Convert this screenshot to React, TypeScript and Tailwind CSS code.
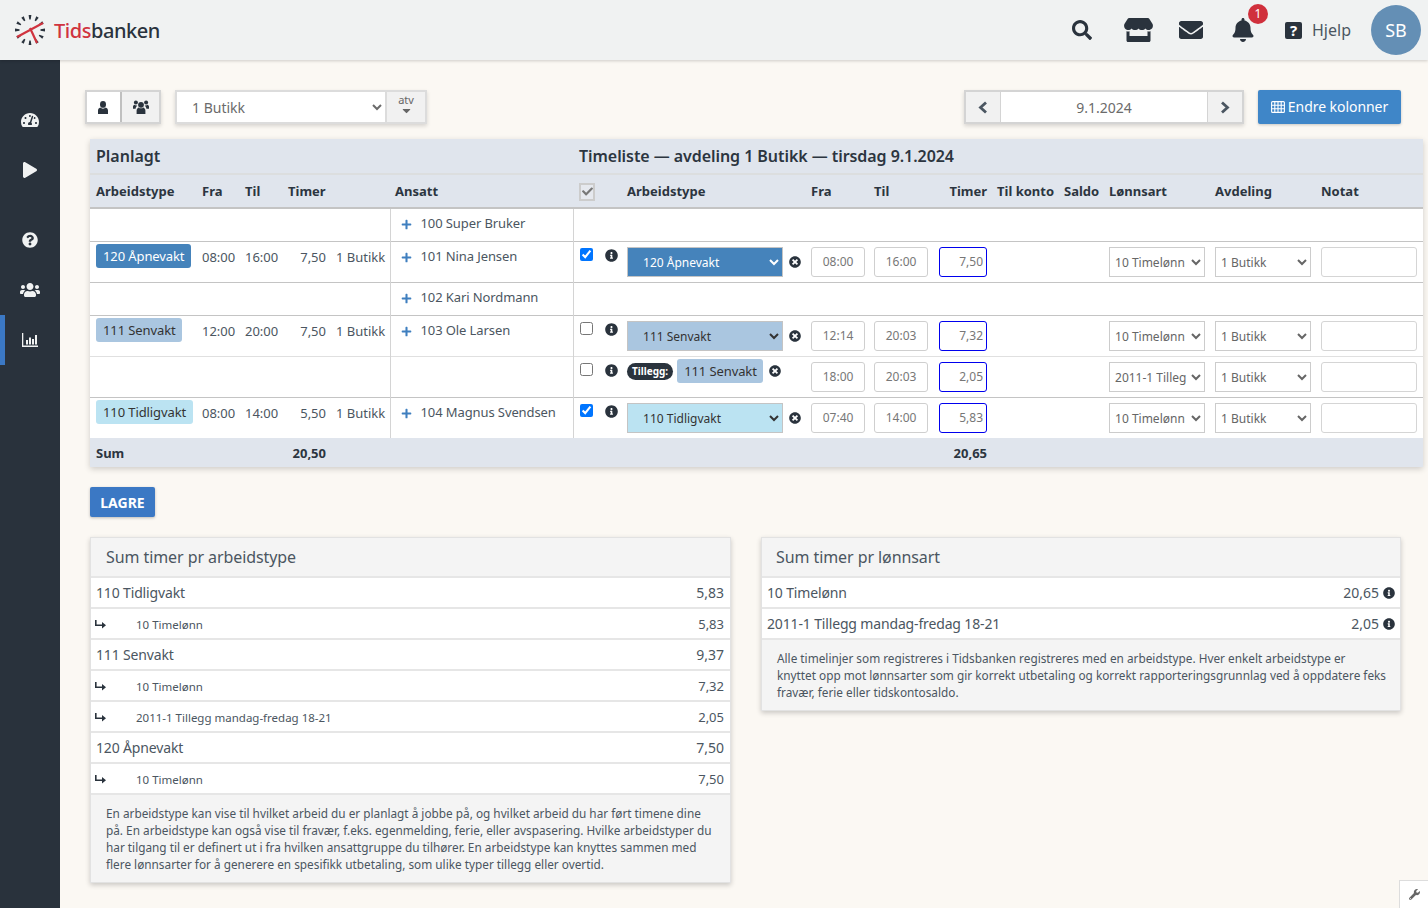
import React from "react";
import { FaSearch, FaStore, FaEnvelope, FaBell, FaTachometerAlt, FaPlay, FaQuestionCircle, FaUsers, FaPlus, FaInfoCircle, FaTimesCircle, FaCaretDown, FaWrench, FaCheck } from "react-icons/fa";

const cols = [107, 43, 43, 48, 59, 183, 27, 22, 184, 63, 64, 59, 67, 45, 106, 106, 107];

function Logo() {
  const ticks = [0, 30, 60, 90, 120, 150, 180, 210, 240, 270, 300, 330];
  return (
    <svg width="32" height="32" viewBox="0 0 32 32" className="shrink-0">
      {ticks.map((a) => (
        <polygon key={a} points="14.6,1 17.4,1 16.7,5.5 15.3,5.5" fill="#2a333d" transform={`rotate(${a} 16 16)`} />
      ))}
      <path d="M3 23 L29 9 M16 14 L23 29" stroke="#d0343f" strokeWidth="2.2" fill="none" />
    </svg>
  );
}

function ChartIcon() {
  return (
    <svg width="16" height="14" viewBox="0 0 16 14" fill="#f0f2f2">
      <path d="M0 0h1.3v12.6H16V14H0z" />
      <rect x="4" y="7" width="2" height="4.5" />
      <rect x="7" y="4.5" width="2" height="7" />
      <rect x="10" y="6" width="2" height="5.5" />
      <rect x="13" y="2" width="2" height="9.5" />
    </svg>
  );
}

function ArrowIcon() {
  return (
    <svg width="11" height="9" viewBox="0 0 11 9" fill="#2a333d">
      <path d="M0 0h1.6v4.4H7V2l4 3.2L7 8.4V6H0z" />
    </svg>
  );
}

function UserIcon() {
  return (
    <svg width="10" height="13" viewBox="0 0 10 13" fill="#2a333d">
      <ellipse cx="5" cy="3.4" rx="3" ry="3.4" />
      <path d="M0 13V9.6C0 8 1 7 2.4 6.6 3 7.3 4 7.8 5 7.8s2-.5 2.6-1.2C9 7 10 8 10 9.6V13z" />
    </svg>
  );
}

function GroupIcon() {
  return (
    <svg width="16" height="14" viewBox="0 0 16 14" fill="#2a333d">
      <circle cx="8" cy="4.8" r="2.9" />
      <circle cx="2.9" cy="2.4" r="2" />
      <circle cx="13.1" cy="2.4" r="2" />
      <path d="M3.6 14v-3.4C3.6 9 4.6 8 5.6 7.4 6.2 8 7 8.3 8 8.3s1.8-.3 2.4-.9c1 .6 2 1.6 2 3.2V14z" />
      <path d="M0 8.8V6.6C0 5.6.7 5 1.6 4.7c.4.4 1 .7 1.5.7.5 0 1 .1 1.2.4C3.4 6.5 2.7 7.6 2.6 8.8z" />
      <path d="M16 8.8V6.6C16 5.6 15.3 5 14.4 4.7c-.4.4-1 .7-1.5.7-.5 0-1 .1-1.2.4.9.7 1.6 1.8 1.7 3z" />
    </svg>
  );
}

function TableIcon() {
  return (
    <svg width="14" height="12" viewBox="0 0 14 12" fill="none" stroke="#ffffff" strokeWidth="1.1">
      <rect x="0.6" y="0.6" width="12.8" height="10.8" rx="1" />
      <path d="M0.6 4.2H13.4M0.6 7.8H13.4M3.8 0.6V11.4M7 0.6V11.4M10.2 0.6V11.4" />
    </svg>
  );
}

function Chevron({ right }: { right?: boolean }) {
  return (
    <svg width="10" height="13" viewBox="0 0 10 13" fill="none" stroke="#4b5661" strokeWidth="2.8">
      <path d={right ? "M2 1.5 L7.5 6.5 L2 11.5" : "M8 1.5 L2.5 6.5 L8 11.5"} />
    </svg>
  );
}

function Badge({ label, bg, fg }: { label: string; bg: string; fg: string }) {
  return <span className={`inline-block h-6 leading-6 pl-[7px] pr-[6.5px] rounded-[3px] text-[13px] tracking-[-0.1px] whitespace-nowrap ${bg} ${fg}`}>{label}</span>;
}

function TimeInput({ value }: { value: string }) {
  return <input readOnly defaultValue={value} className="block w-[54px] h-[30px] border border-[#cfcfcf] rounded-[3px] text-center text-[12px] text-[#777] bg-white outline-none" />;
}

function HoursInput({ value }: { value: string }) {
  return <input readOnly defaultValue={value} className="block w-[48px] h-[30px] border border-[#0000ee] rounded-[3px] text-right pr-[3px] text-[12px] text-[#777] bg-white outline-none" />;
}

function SmallSelect({ value }: { value: string }) {
  return (
    <select defaultValue={value} className="block w-[96px] h-[30px] border border-[#cccccc] bg-white text-[12px] text-[#666] pl-[1px] pt-[1px] outline-none">
      <option>{value}</option>
    </select>
  );
}

function NoteInput() {
  return <input readOnly className="block w-[96px] h-[30px] border border-[#d5d5d5] rounded-[3px] bg-white outline-none" />;
}

function Cross() {
  return <FaTimesCircle className="text-[#2a333d] text-[12px]" />;
}

type Row = {
  h: string;
  employee?: string;
  plan?: { label: string; bg: string; fg: string; from: string; to: string; hours: string };
  real?: {
    checked: boolean;
    addon?: boolean;
    label: string;
    selBg: string;
    selFg: string;
    from: string;
    to: string;
    hours: string;
    wage: string;
  };
};

const rows: Row[] = [
  { h: "h-[33px]", employee: "100 Super Bruker" },
  {
    h: "h-[41px]",
    employee: "101 Nina Jensen",
    plan: { label: "120 Åpnevakt", bg: "bg-[#4583bb]", fg: "text-white", from: "08:00", to: "16:00", hours: "7,50" },
    real: { checked: true, label: "120 Åpnevakt", selBg: "bg-[#4583bb]", selFg: "text-white", from: "08:00", to: "16:00", hours: "7,50", wage: "10 Timelønn" },
  },
  { h: "h-[33px]", employee: "102 Kari Nordmann" },
  {
    h: "h-[41px]",
    employee: "103 Ole Larsen",
    plan: { label: "111 Senvakt", bg: "bg-[#aac6e0]", fg: "text-[#333]", from: "12:00", to: "20:00", hours: "7,50" },
    real: { checked: false, label: "111 Senvakt", selBg: "bg-[#aac6e0]", selFg: "text-[#333]", from: "12:14", to: "20:03", hours: "7,32", wage: "10 Timelønn" },
  },
  {
    h: "h-[41px]",
    real: { checked: false, addon: true, label: "111 Senvakt", selBg: "", selFg: "", from: "18:00", to: "20:03", hours: "2,05", wage: "2011-1 Tilleg" },
  },
  {
    h: "h-[41px]",
    employee: "104 Magnus Svendsen",
    plan: { label: "110 Tidligvakt", bg: "bg-[#bbe3f2]", fg: "text-[#333]", from: "08:00", to: "14:00", hours: "5,50" },
    real: { checked: true, label: "110 Tidligvakt", selBg: "bg-[#bbe3f2]", selFg: "text-[#333]", from: "07:40", to: "14:00", hours: "5,83", wage: "10 Timelønn" },
  },
];

function Th({ children, right, first }: { children?: React.ReactNode; right?: boolean; first?: boolean }) {
  return <th className={`${first ? "pl-[6px]" : "pl-[5px]"} pr-[5px] pt-[1px] text-[13px] font-bold text-[#2c3540] whitespace-nowrap align-middle ${right ? "text-right" : "text-left"}`}>{children}</th>;
}

function TimeTable() {
  return (
    <table className="table-fixed border-collapse w-[1333px] bg-white shadow-[0_2px_6px_rgba(0,0,0,0.18)]">
      <colgroup>
        {cols.map((c, i) => (
          <col key={i} style={{ width: c }} />
        ))}
      </colgroup>
      <thead className="bg-[#e0e5ed]">
        <tr className="h-[35px] border-b-[2px] border-[#dcdedf]">
          <th colSpan={6} className="px-[6px] text-left text-[16px] font-semibold text-[#2c3540]">Planlagt</th>
          <th colSpan={11} className="text-left text-[16px] font-semibold tracking-[-0.06px] text-[#2c3540] pl-[6px]">
            Timeliste — avdeling 1 Butikk — tirsdag 9.1.2024
          </th>
        </tr>
        <tr className="h-[34px] border-b-[2px] border-[#c4c4c4]">
          <Th first>Arbeidstype</Th>
          <Th>Fra</Th>
          <Th>Til</Th>
          <Th>Timer</Th>
          <Th />
          <Th>Ansatt</Th>
          <Th>
            <span className="flex items-center justify-center w-[16px] h-[18px] ml-[1px] border-2 border-[#cccccc] bg-[#e6e9ef] text-[#777] text-[11px]">
              <FaCheck />
            </span>
          </Th>
          <Th />
          <Th>Arbeidstype</Th>
          <Th>Fra</Th>
          <Th>Til</Th>
          <Th right>Timer</Th>
          <Th>Til konto</Th>
          <Th>Saldo</Th>
          <Th>Lønnsart</Th>
          <Th>Avdeling</Th>
          <Th>Notat</Th>
        </tr>
      </thead>
      <tbody className="text-[13px] text-[#4b5661]">
        {rows.map((r, i) => (
          <tr key={i} className={`${r.h} border-b ${i === 3 ? "border-[#e0e0e0]" : "border-[#c4c4c4]"} last:border-b-0`}>
            <td className="pl-[6px] align-top pt-[2px]">{r.plan && <Badge label={r.plan.label} bg={r.plan.bg} fg={r.plan.fg} />}</td>
            <td className="px-[5px] align-top pt-[6px]">{r.plan?.from}</td>
            <td className="px-[5px] align-top pt-[6px]">{r.plan?.to}</td>
            <td className="px-[5px] align-top pt-[6px] text-right">{r.plan?.hours}</td>
            <td className="pl-[5px] align-top pt-[6px] whitespace-nowrap border-r border-[#d4d4d4]">{r.plan && "1 Butikk"}</td>
            <td className="pl-[10px] align-top pt-[5px] border-r border-[#d4d4d4] whitespace-nowrap tracking-[-0.1px]">
              {r.employee && (
                <span className="flex items-center gap-[9px]">
                  <FaPlus className="text-[#3f7fbf] text-[11px] mt-[2px]" />
                  {r.employee}
                </span>
              )}
            </td>
            {r.real ? (
              <>
                <td className="pl-[6px] align-top pt-[6px]">
                  <input type="checkbox" readOnly defaultChecked={r.real.checked} className="block" />
                </td>
                <td className="pl-[5px] align-top pt-[7px]">
                  <FaInfoCircle className="text-[#2a333d] text-[13px]" />
                </td>
                <td className="pl-[5px] align-middle">
                  {r.real.addon ? (
                    <span className="flex items-center gap-[4px] -mt-[12px]">
                      <span className="inline-block h-[17px] leading-[17px] mt-[2px] px-[5px] rounded-full bg-[#2a333d] text-white text-[10px] font-bold [font-family:'Liberation_Sans',sans-serif]">Tillegg:</span>
                      <Badge label={r.real.label} bg="bg-[#aac6e0]" fg="text-[#333]" />
                      <span className="ml-[2px]"><Cross /></span>
                    </span>
                  ) : (
                    <span className="flex items-center gap-[6px]">
                      <select defaultValue={r.real.label} className={`w-[156px] h-[30px] border border-[#c4c4c4] pl-[11px] pt-[1px] text-[12px] outline-none ${r.real.selBg} ${r.real.selFg}`}>
                        <option>{r.real.label}</option>
                      </select>
                      <Cross />
                    </span>
                  )}
                </td>
                <td className="pl-[5px]"><TimeInput value={r.real.from} /></td>
                <td className="pl-[5px]"><TimeInput value={r.real.to} /></td>
                <td className="pl-[6px]"><HoursInput value={r.real.hours} /></td>
                <td />
                <td />
                <td className="pl-[5px]"><SmallSelect value={r.real.wage} /></td>
                <td className="pl-[5px]"><SmallSelect value="1 Butikk" /></td>
                <td className="pl-[5px]"><NoteInput /></td>
              </>
            ) : (
              <td colSpan={11} />
            )}
          </tr>
        ))}
      </tbody>
      <tfoot className="bg-[#e0e5ed] text-[13px] font-bold text-[#2c3540]">
        <tr className="h-[29px]">
          <td className="pl-[6px] pt-[2px]">Sum</td>
          <td />
          <td />
          <td className="px-[5px] pt-[2px] text-right">20,50</td>
          <td colSpan={7} />
          <td className="px-[5px] pt-[2px] text-right">20,65</td>
          <td colSpan={5} />
        </tr>
      </tfoot>
    </table>
  );
}

function MainRow({ label, value, info }: { label: string; value: string; info?: boolean }) {
  return (
    <div className={`h-[31px] border-b-[2px] border-[#e6e6e6] flex items-center justify-between pl-[5px] ${info ? "pr-[5px]" : "pr-[6px]"} text-[14px] text-[#4b5661] bg-white`}>
      <span className="tracking-[-0.15px]">{label}</span>
      <span className="flex items-center gap-[4px]">
        {value}
        {info && <FaInfoCircle className="text-[#2a333d] text-[12px]" />}
      </span>
    </div>
  );
}

function SubRow({ label, value }: { label: string; value: string }) {
  return (
    <div className="h-[31px] border-b-[2px] border-[#e6e6e6] flex items-center justify-between pl-[4px] pr-[6px] pt-[2px] text-[13px] text-[#4b5661] bg-white">
      <span className="flex items-center">
        <span className="w-[41px]"><ArrowIcon /></span>
        <span className="text-[11.5px]">{label}</span>
      </span>
      <span>{value}</span>
    </div>
  );
}

function Panel({ title, children, note, wide }: { title: string; children: React.ReactNode; note: string; wide?: boolean }) {
  return (
    <div className={`${wide ? "w-[641px]" : "w-[640px]"} border border-[#e2e2e2] bg-[#f4f4f4] shadow-[0_2px_5px_rgba(0,0,0,0.2)]`}>
      <div className={`h-[40px] border-b-[2px] border-[#e6e6e6] flex items-center ${wide ? "px-[15px]" : "px-[14px]"} text-[16px] tracking-[-0.08px] text-[#4b5661]`}>{title}</div>
      {children}
      <div className={`${wide ? "pl-[15px] pr-[15px]" : "pl-[15px] pr-[10px]"} pt-[10px] pb-[9px] text-[11.8px] leading-[17px] text-[#4b5661] whitespace-pre-line`}>{note}</div>
    </div>
  );
}

export default function App() {
  return (
    <div className="h-screen overflow-hidden flex flex-col bg-[#fbf8f3] [font-family:'Open_Sans',sans-serif] relative">
      <header className="h-[60px] shrink-0 bg-[#f0f2f2] flex items-center pl-[14px] pr-[7px] shadow-[0_1px_3px_rgba(0,0,0,0.18)] relative z-10">
        <Logo />
        <span className="ml-[8px] pt-[1px] text-[20px] font-medium tracking-[-0.45px] [font-family:'Roboto',sans-serif] text-[#2a333d]">
          <span className="text-[#d0343f]">Tids</span>banken
        </span>
        <div className="flex-1" />
        <FaSearch className="text-[20px] text-[#2a333d] mr-[32px]" />
        <FaStore className="text-[24px] w-[29px] text-[#2a333d] mr-[26px]" />
        <FaEnvelope className="text-[24px] text-[#2a333d] mr-[28px]" />
        <span className="relative mr-[30px]">
          <FaBell className="text-[24px] text-[#2a333d]" />
          <span className="absolute -top-[14px] left-[17px] w-5 h-5 rounded-full bg-[#d0303c] text-white text-[12px] flex items-center justify-center">1</span>
        </span>
        <span className="w-[17px] h-[17px] rounded-[2px] bg-[#2a333d] text-white text-[15px] font-bold flex items-center justify-center mr-[10px]">?</span>
        <span className="text-[16px] text-[#4b5661] mr-[20px]">Hjelp</span>
        <span className="w-[50px] h-[50px] rounded-full bg-[#648fb5] text-white text-[18px] flex items-center justify-center">SB</span>
      </header>
      <div className="flex-1 flex min-h-0">
        <nav className="w-[60px] shrink-0 bg-[#29323c] flex flex-col items-center text-[#f0f2f2]">
          <div className="h-[50px] mt-[35px] flex items-center justify-center text-[18px]"><FaTachometerAlt /></div>
          <div className="h-[50px] flex items-center justify-center text-[16px]"><FaPlay /></div>
          <div className="h-[20px]" />
          <div className="h-[50px] flex items-center justify-center text-[16px]"><FaQuestionCircle /></div>
          <div className="h-[50px] flex items-center justify-center text-[20px]"><FaUsers /></div>
          <div className="h-[50px] w-full flex items-center justify-center border-l-[5px] border-[#3b78c4] pr-[5px]"><ChartIcon /></div>
        </nav>
        <main className="flex-1 min-w-0 pl-[25px] pt-[30px]">
          <div className="flex items-start w-[1316px]">
            <div className="flex h-[34px] border-2 border-[#d4d4d4] bg-white shadow-[0_2px_4px_rgba(0,0,0,0.15)]">
              <span className="w-[33px] pr-[2px] flex items-center justify-center"><UserIcon /></span>
              <span className="w-[39px] flex items-center justify-center bg-[#f1f1f1] border-l-2 border-[#c0c0c0]"><GroupIcon /></span>
            </div>
            <div className="flex h-[34px] ml-[14px] border-2 border-[#dcdcdc] bg-white shadow-[0_2px_4px_rgba(0,0,0,0.15)]">
              <select defaultValue="1 Butikk" className="w-[208px] pl-[11px] text-[14px] text-[#6b6b6b] bg-white outline-none">
                <option>1 Butikk</option>
              </select>
              <span className="w-[40px] bg-[#f1f1f1] border-l-2 border-[#dcdcdc] flex flex-col items-center justify-center text-[#666]">
                <span className="text-[11px] leading-[10px] [font-family:'Liberation_Sans',sans-serif] -mt-[3px]">atv</span>
                <FaCaretDown className="text-[13px] -my-[1px]" />
              </span>
            </div>
            <div className="flex-1" />
            <div className="flex h-[34px] border-2 border-[#d4d4d4] bg-white shadow-[0_2px_4px_rgba(0,0,0,0.15)]">
              <span className="w-[34px] bg-[#f1f1f1] flex items-center justify-center"><Chevron /></span>
              <span className="w-[208px] flex items-center justify-center text-[14px] text-[#6b6b6b] border-x border-[#d4d4d4]">9.1.2024</span>
              <span className="w-[34px] bg-[#f1f1f1] flex items-center justify-center"><Chevron right /></span>
            </div>
            <button className="ml-[14px] w-[143px] h-[34px] pb-[1px] rounded-[2px] bg-[#3f86c8] text-white text-[14px] flex items-center justify-center gap-[3px] tracking-[-0.05px] shadow-[0_1px_3px_rgba(0,0,0,0.2)]">
              <TableIcon />Endre kolonner
            </button>
          </div>
          <div className="ml-[5px] mt-[15px] w-[1333px]">
            <TimeTable />
          </div>
          <button className="ml-[5px] mt-[20px] w-[65px] h-[30px] rounded-[2px] bg-[#3b78c4] text-white text-[14px] font-bold shadow-[0_1px_3px_rgba(0,0,0,0.25)]">LAGRE</button>
          <div className="ml-[5px] mt-[20px] flex items-start gap-[30px]">
            <Panel
              wide
              title="Sum timer pr arbeidstype"
              note="En arbeidstype kan vise til hvilket arbeid du er planlagt å jobbe på, og hvilket arbeid du har ført timene dine på. En arbeidstype kan også vise til fravær, f.eks. egenmelding, ferie, eller avspasering. Hvilke arbeidstyper du har tilgang til er definert ut i fra hvilken ansattgruppe du tilhører. En arbeidstype kan knyttes sammen med flere lønnsarter for å generere en spesifikk utbetaling, som ulike typer tillegg eller overtid."
            >
              <MainRow label="110 Tidligvakt" value="5,83" />
              <SubRow label="10 Timelønn" value="5,83" />
              <MainRow label="111 Senvakt" value="9,37" />
              <SubRow label="10 Timelønn" value="7,32" />
              <SubRow label="2011-1 Tillegg mandag-fredag 18-21" value="2,05" />
              <MainRow label="120 Åpnevakt" value="7,50" />
              <SubRow label="10 Timelønn" value="7,50" />
            </Panel>
            <Panel
              title="Sum timer pr lønnsart"
              note={"Alle timelinjer som registreres i Tidsbanken registreres med en arbeidstype. Hver enkelt arbeidstype er\nknyttet opp mot lønnsarter som gir korrekt utbetaling og korrekt rapporteringsgrunnlag ved å oppdatere feks\nfravær, ferie eller tidskontosaldo."}
            >
              <MainRow label="10 Timelønn" value="20,65" info />
              <MainRow label="2011-1 Tillegg mandag-fredag 18-21" value="2,05" info />
            </Panel>
          </div>
        </main>
      </div>
      <div className="absolute right-0 bottom-0 w-[29px] h-[28px] bg-white border-l border-t border-[#dddddd] flex items-center justify-center text-[11px] text-[#666]">
        <FaWrench />
      </div>
    </div>
  );
}
